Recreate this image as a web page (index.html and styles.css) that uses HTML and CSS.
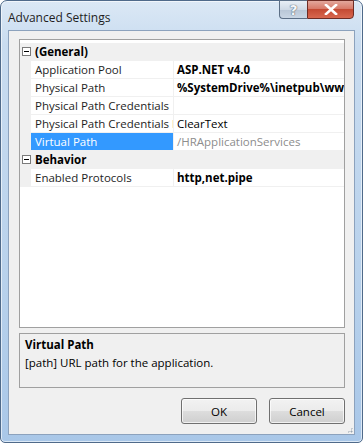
FILE: index.html
```html
<!DOCTYPE html>
<html lang="en">
<head>
    <meta charset="UTF-8">
    <title>Advanced Settings</title>
    <link rel="stylesheet" href="styles.css">
</head>
<body>
    <div class="window">
        <div class="titlebar">
            <span class="title">Advanced Settings</span>
            <div class="caption-buttons">
                <div class="cap-btn help">?</div>
                <div class="cap-btn close">
                    <svg width="14" height="11" viewBox="0 0 14 11">
                        <path d="M2 1 L12 10 M12 1 L2 10" stroke="#fff" stroke-width="2.6" stroke-linecap="square"/>
                    </svg>
                </div>
            </div>
        </div>

        <div class="client">
            <div class="grid">
                <div class="row category">
                    <div class="gutter"><span class="toggle"></span></div>
                    <div class="cat-name">(General)</div>
                </div>
                <div class="row">
                    <div class="gutter"></div>
                    <div class="name">Application Pool</div>
                    <div class="val bold">ASP.NET v4.0</div>
                </div>
                <div class="row">
                    <div class="gutter"></div>
                    <div class="name">Physical Path</div>
                    <div class="val bold">%SystemDrive%\inetpub\wwwroot\HRApplicationServices</div>
                </div>
                <div class="row">
                    <div class="gutter"></div>
                    <div class="name">Physical Path Credentials</div>
                    <div class="val"></div>
                </div>
                <div class="row">
                    <div class="gutter"></div>
                    <div class="name">Physical Path Credentials Logon Type</div>
                    <div class="val">ClearText</div>
                </div>
                <div class="row">
                    <div class="gutter"></div>
                    <div class="name selected">Virtual Path</div>
                    <div class="val dim">/HRApplicationServices</div>
                </div>
                <div class="row category">
                    <div class="gutter"><span class="toggle"></span></div>
                    <div class="cat-name">Behavior</div>
                </div>
                <div class="row">
                    <div class="gutter"></div>
                    <div class="name">Enabled Protocols</div>
                    <div class="val bold">http,net.pipe</div>
                </div>
            </div>

            <div class="description">
                <div class="desc-title">Virtual Path</div>
                <div class="desc-text">[path] URL path for the application.</div>
            </div>

            <div class="actions">
                <button class="btn">OK</button>
                <button class="btn">Cancel</button>
            </div>
        </div>
        <div class="grip"></div>
    </div>
</body>
</html>
```

FILE: styles.css
```css
body {
    margin: 0;
    padding: 0;
    background: #fff;
    font-family: 'Open Sans', 'Liberation Sans', sans-serif;
    font-size: 11.5px;
    color: #000;
}

.window {
    position: relative;
    box-sizing: border-box;
    width: 363px;
    height: 443px;
    border: 1px solid #4f6a8a;
    border-radius: 7px 7px 5px 5px;
    background: linear-gradient(180deg, #dbe8f5 0%, #c9dcf0 10%, #b9d2ec 60%, #a9c7e8 100%);
    box-shadow: inset 0 0 0 1px rgba(255, 255, 255, 0.6);
    display: flex;
    flex-direction: column;
}

.titlebar {
    height: 29px;
    display: flex;
    justify-content: space-between;
    align-items: flex-start;
}

.title {
    margin: 8px 0 0 7px;
    font-size: 12px;
    color: #1e1e1e;
}

.caption-buttons {
    display: flex;
    margin-right: 8px;
    margin-top: -1px;
}

.cap-btn {
    height: 19px;
    box-sizing: border-box;
    border: 1px solid #5c6f86;
    display: flex;
    align-items: center;
    justify-content: center;
}

.help {
    width: 28px;
    border-right: none;
    border-radius: 0 0 0 4px;
    background: linear-gradient(180deg, #e8eef5 0%, #cfd9e5 50%, #b8c6d6 51%, #c9d6e4 100%);
    color: #f4f6f9;
    font-family: 'DejaVu Sans', sans-serif;
    font-weight: bold;
    font-size: 14px;
    text-shadow: 0 0 1px #4a5968, 0 0 1px #4a5968;
}

.close {
    width: 47px;
    border-radius: 0 0 4px 0;
    background: linear-gradient(180deg, #e3a79c 0%, #d77a69 45%, #c44a33 50%, #d8684f 100%);
    border-color: #6e2c24;
}

.client {
    flex: 1;
    margin: 0 7px 7px 7px;
    border: 1px solid #8ca2bd;
    background: #f0f0f0;
    padding: 8px 9px 9px 10px;
    display: flex;
    flex-direction: column;
}

.grid {
    height: 289px;
    box-sizing: border-box;
    border: 1px solid #a0a0a0;
    background: #fff;
    padding-top: 3px;
}

.row {
    display: flex;
    height: 18px;
    box-sizing: border-box;
    border-bottom: 1px solid #f0f0f0;
    line-height: 17px;
    white-space: nowrap;
}

.gutter {
    width: 11px;
    flex-shrink: 0;
    background: #f0f0f0;
    position: relative;
}

.category {
    background: #f0f0f0;
}

.toggle {
    position: absolute;
    left: 2px;
    top: 4px;
    width: 7px;
    height: 7px;
    border: 1px solid #7a7a7a;
    background: #fff;
}

.toggle::after {
    content: "";
    position: absolute;
    left: 1px;
    top: 3px;
    width: 5px;
    height: 1px;
    background: #000;
}

.cat-name {
    padding-left: 4px;
    font-weight: bold;
}

.name {
    width: 142px;
    flex-shrink: 0;
    padding-left: 4px;
    box-sizing: border-box;
    overflow: hidden;
    color: #1e1e1e;
}

.name.selected {
    background: #3399ff;
    color: #fff;
}

.val {
    flex: 1;
    border-left: 1px solid #f0f0f0;
    padding-left: 3px;
    overflow: hidden;
}

.bold {
    font-weight: bold;
}

.dim {
    color: #8d8d8d;
}

.description {
    margin-top: 5px;
    height: 55px;
    box-sizing: border-box;
    border: 1px solid #a0a0a0;
    padding: 2px 5px;
    line-height: 18px;
}

.desc-title {
    font-weight: bold;
}

.actions {
    margin-top: 10px;
    display: flex;
    justify-content: flex-end;
    gap: 12px;
}

.btn {
    width: 76px;
    height: 26px;
    border: 1px solid #707070;
    border-radius: 3px;
    background: linear-gradient(180deg, #f2f2f2 0%, #ebebeb 50%, #dddddd 51%, #cfcfcf 100%);
    box-shadow: inset 0 0 0 1px rgba(255, 255, 255, 0.7);
    font-family: inherit;
    font-size: 11.5px;
    color: #000;
    padding: 0;
}

.grip {
    position: absolute;
    right: 9px;
    bottom: 9px;
    width: 6px;
    height: 6px;
    background:
        radial-gradient(circle, #9aa5b0 0.8px, transparent 1.2px) 0 0 / 3px 3px;
    clip-path: polygon(100% 0, 100% 100%, 0 100%);
}
```
